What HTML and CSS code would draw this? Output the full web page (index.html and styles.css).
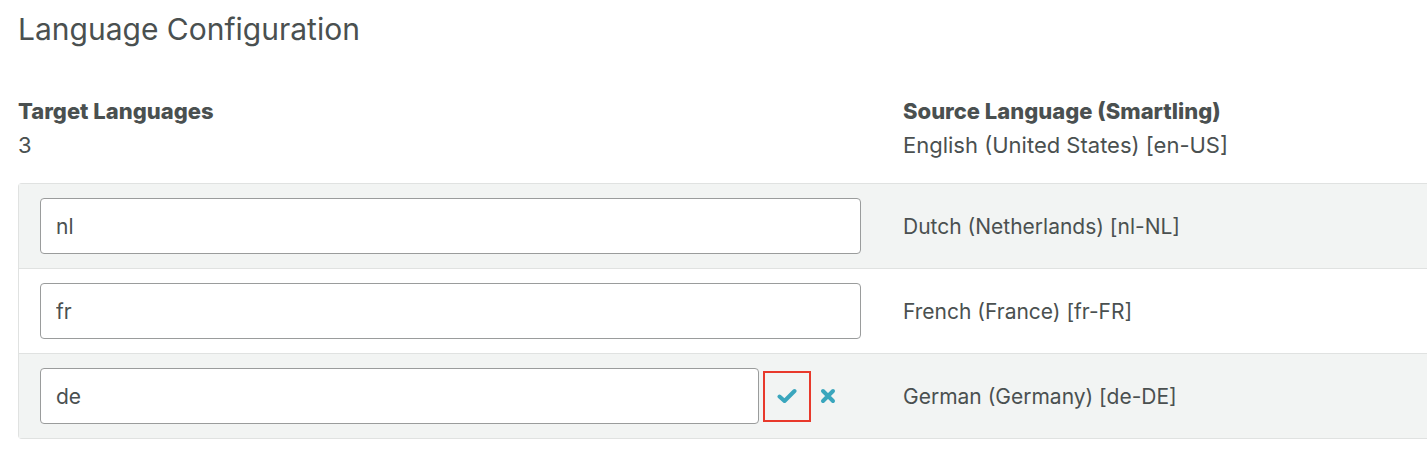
FILE: index.html
```html
<!DOCTYPE html>
<html lang="en">
<head>
    <meta charset="UTF-8">
    <title>Language Configuration</title>
    <link rel="stylesheet" href="styles.css">
</head>
<body>

<div class="page">
    <h1 class="title">Language Configuration</h1>

    <div class="summary">
        <div>
            <div class="label">Target Languages</div>
            <div class="value">3</div>
        </div>
        <div>
            <div class="label">Source Language (Smartling)</div>
            <div class="value">English (United States) [en-US]</div>
        </div>
    </div>

    <div class="lang-table">
        <div class="lang-row shaded">
            <div class="lang-edit">
                <input class="lang-input" type="text" value="nl">
            </div>
            <div class="lang-name">Dutch (Netherlands) [nl-NL]</div>
        </div>
        <div class="lang-row">
            <div class="lang-edit">
                <input class="lang-input" type="text" value="fr">
            </div>
            <div class="lang-name">French (France) [fr-FR]</div>
        </div>
        <div class="lang-row shaded">
            <div class="lang-edit">
                <input class="lang-input editing" type="text" value="de">
                <button class="icon-btn confirm" title="Save">
                    <svg width="20" height="16" viewBox="0 0 20 16">
                        <path d="M2.5 8.5 L7.5 13 L17.5 3" fill="none" stroke="#3aa6bd" stroke-width="4" stroke-linecap="round" stroke-linejoin="round"/>
                    </svg>
                </button>
                <button class="icon-btn cancel" title="Cancel">
                    <svg width="16" height="16" viewBox="0 0 16 16">
                        <path d="M3 3 L13 13 M13 3 L3 13" fill="none" stroke="#3aa6bd" stroke-width="4" stroke-linecap="round"/>
                    </svg>
                </button>
            </div>
            <div class="lang-name">German (Germany) [de-DE]</div>
        </div>
    </div>
</div>

</body>
</html>
```

FILE: styles.css
```css
body {
    margin: 0;
    padding: 0;
    font-family: Inter, "Open Sans", sans-serif;
    color: #4a5050;
    background-color: #fff;
    overflow: hidden;
}
.page {
    padding: 11px 0 0 18px;
}
.title {
    margin: 0;
    font-size: 30px;
    font-weight: 400;
    line-height: 36px;
}
.summary {
    display: grid;
    grid-template-columns: 885px 1fr;
    margin-top: 52px;
}
.label {
    font-size: 22px;
    font-weight: 800;
    line-height: 24px;
}
.value {
    font-size: 22px;
    line-height: 24px;
    margin-top: 10px;
}
.lang-table {
    margin-top: 26px;
    margin-right: -20px;
    border: 1px solid #e0e2e1;
    border-right: none;
    border-radius: 4px 0 0 4px;
}
.lang-row {
    display: grid;
    grid-template-columns: 884px 1fr;
    align-items: center;
    padding: 14px 0;
    border-top: 1px solid #e0e2e1;
}
.lang-row:first-child {
    border-top: none;
}
.lang-row.shaded {
    background-color: #f2f4f3;
}
.lang-edit {
    display: flex;
    align-items: center;
    padding-left: 21px;
}
.lang-input {
    box-sizing: border-box;
    width: 821px;
    height: 56px;
    padding: 0 15px;
    border: 1px solid #9a9c9c;
    border-radius: 4px;
    background-color: #fff;
    font-family: inherit;
    font-size: 21px;
    color: #4a5050;
}
.lang-input.editing {
    width: 719px;
}
.icon-btn {
    display: flex;
    align-items: center;
    justify-content: center;
    padding: 0;
    border: none;
    background: none;
    cursor: pointer;
}
.confirm {
    box-sizing: border-box;
    width: 48px;
    height: 51px;
    margin-left: 4px;
    border: 2px solid #e8392b;
}
.cancel {
    width: 16px;
    height: 16px;
    margin-left: 9px;
}
.lang-name {
    font-size: 21px;
}
```
